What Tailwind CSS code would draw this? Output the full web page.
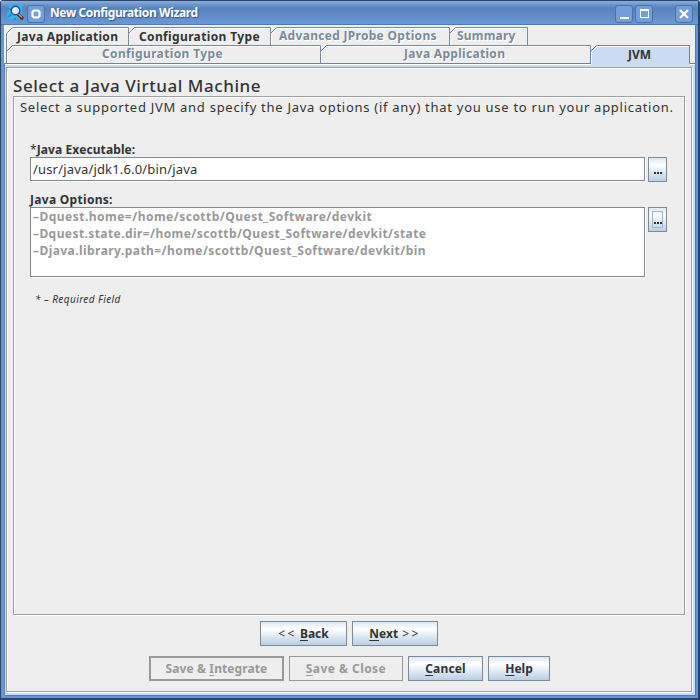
<!DOCTYPE html>
<html lang="en">
<head>
<meta charset="utf-8">
<title>New Configuration Wizard</title>
<script src="https://cdn.jsdelivr.net/npm/@tailwindcss/browser@4"></script>
</head>
<body class="w-[700px] h-[700px] overflow-hidden font-['Noto_Sans','Open_Sans',sans-serif] text-[#333333]">
<div class="w-[700px] h-[700px] flex flex-col bg-[#6796d6] border-l border-t border-b-2 border-r-2 border-[#2c4468] rounded-t-[3px]">
  <!-- title bar -->
  <header class="h-[24px] shrink-0 flex items-center pl-[6px] pr-[5px] bg-linear-to-b from-[#86aee0] via-[#5883bb] via-30% to-[#6a98d6] border-b border-[#4f78b4]">
    <svg class="w-[18px] h-[18px] mt-px" viewBox="0 0 18 18">
      <path d="M1 1L6 0L8 1L14 0L16 4L15 8L16 13L12 15L8 14L4 16L1 15L0 9L2 7Z" fill="#38b2ef"/>
      <path d="M1 4L4 6M1 13L5 10M9 14L7 16" stroke="#0b8fdb" stroke-width="1.500"/>
      <path d="M11.500 10.500L15 14" stroke="#4b2418" stroke-width="3.200" stroke-linecap="round"/>
      <path d="M11.500 10L15 13.500" stroke="#e8984a" stroke-width="1.500"/>
      <circle cx="8.500" cy="6.500" r="4.200" fill="#e2effb" stroke="#2646b4" stroke-width="1.400"/>
      <path d="M6.500 6.500Q6.500 4.500 8.500 4.500" fill="none" stroke="#fff" stroke-width="1.200"/>
    </svg>
    <span class="ml-[2px] mt-[2px] w-[18px] h-[18px] rounded-[3px] border border-[#4a70ab] bg-[#759ed8] flex items-center justify-center"><svg class="w-[10px] h-[10px]" viewBox="0 0 10 10"><path d="M3 1.500H7L8.500 3V7L7 8.500H3L1.500 7V3Z" fill="none" stroke="#fff" stroke-width="2.200"/></svg></span>
    <h1 class="ml-[5px] text-[12px] leading-[20px] font-bold text-white tracking-[-0.4px] whitespace-nowrap [text-shadow:1px_1px_1px_#33558c]">New Configuration Wizard</h1>
    <div class="ml-auto flex items-center mt-[2px]">
      <span class="w-[18px] h-[18px] rounded-[3px] border border-[#4a70ab] bg-[#759ed8] flex justify-center items-end pb-[3px]"><i class="w-[9px] h-[2px] bg-white"></i></span>
      <span class="ml-[2px] w-[18px] h-[18px] rounded-[3px] border border-[#4a70ab] bg-[#759ed8] flex items-center justify-center"><i class="w-[9px] h-[9px] border border-t-2 border-white"></i></span>
      <span class="ml-[22px] w-[18px] h-[18px] rounded-[3px] border border-[#4a70ab] bg-[#759ed8] flex items-center justify-center"><svg class="w-[10px] h-[10px]" viewBox="0 0 10 10"><path d="M1 1L9 9M9 1L1 9" stroke="#fff" stroke-width="2.200"/></svg></span>
    </div>
  </header>

  <main class="flex-1 flex flex-col ml-[3px] mr-[3px] mb-[3px] bg-[#eeeeee] shadow-[1px_1px_0_#5679ad]">
    <!-- tab rows -->
    <nav class="h-[38px] pt-[2px] pl-[2px] flex flex-col text-[12px] leading-[18px] font-bold whitespace-nowrap">
      <div class="h-[18px] flex">
        <div class="relative w-[122px] pl-[11px]"><svg class="absolute left-0 top-0 w-[123px] h-[19px]" fill="none"><path d="M1.500 19V7L7 1.500H122" stroke="#fff"/><path d="M.5 19V6.500L6.500 .5H122.500V19" stroke="#7a8a99"/></svg><span class="relative top-px tracking-[0.3px]">Java Application</span></div>
        <div class="relative w-[142px] pl-[11px]"><svg class="absolute left-0 top-0 w-[143px] h-[19px]" fill="none"><path d="M1.500 19V7L7 1.500H142" stroke="#fff"/><path d="M.5 19V6.500L6.500 .5H142.500V19" stroke="#7a8a99"/></svg><span class="relative top-px tracking-[0.36px]">Configuration Type</span></div>
        <div class="relative w-[179px] pl-[9px] text-[#7a8a99] [text-shadow:1px_1px_0_#fff]"><svg class="absolute left-0 top-0 w-[180px] h-[19px]" fill="none"><path d="M1.500 19V7L7 1.500H179" stroke="#fff"/><path d="M.5 19V6.500L6.500 .5H179.500V19" stroke="#7a8a99"/></svg><span class="relative tracking-[0.3px]">Advanced JProbe Options</span></div>
        <div class="relative w-[78px] pl-[8px] text-[#7a8a99] [text-shadow:1px_1px_0_#fff]"><svg class="absolute left-0 top-0 w-[79px] h-[19px]" fill="none"><path d="M1.500 19V7L7 1.500H78" stroke="#fff"/><path d="M.5 19V6.500L6.500 .5H78.500V19" stroke="#7a8a99"/></svg><span class="relative tracking-[0.2px]">Summary</span></div>
      </div>
      <div class="h-[18px] flex text-[#7a8a99] [text-shadow:1px_1px_0_#fff]">
        <div class="relative w-[314px] pl-[96px] leading-[17px]"><svg class="absolute left-0 top-0 w-[315px] h-[18px]" fill="none"><path d="M1.500 18V7L7 1.500H314" stroke="#fff"/><path d="M.5 0V18M.5 6.500L6.500 .5H314.500V18" stroke="#7a8a99"/></svg><span class="relative tracking-[0.36px]">Configuration Type</span></div>
        <div class="relative w-[270px] pl-[84px] leading-[17px]"><svg class="absolute left-0 top-0 w-[271px] h-[18px]" fill="none"><path d="M1.500 18V7L7 1.500H270" stroke="#fff"/><path d="M.5 18V6.500L6.500 .5H270.500V18" stroke="#7a8a99"/></svg><span class="relative tracking-[0.3px]">Java Application</span></div>
        <div class="relative z-10 w-[101px] text-center text-[#333] leading-[20px] [text-shadow:none]"><svg class="absolute left-0 top-0 w-[101px] h-[20px]"><path d="M1 20V6L7 0H100V20Z" fill="#c8ddf2"/><path d="M1.500 19V7L7 1.500H99" fill="none" stroke="#fff"/><path d="M.5 18V6.500L6.500 .5H99.500V18.500" fill="none" stroke="#6382bf"/></svg><span class="relative left-[-1px] tracking-[0]">JVM</span></div>
      </div>
    </nav>

    <!-- selected tab content -->
    <section class="flex-1 border-t border-l border-[#6382bf] bg-[#c8ddf2] pl-px pr-[3px] pb-[3px] flex shadow-[inset_0_1px_0_#fff] pt-[3px]">
      <div class="flex-1 flex flex-col border border-[#9f9f9f] shadow-[inset_1px_1px_0_#fff,1px_1px_0_#fff] bg-[#eeeeee] pl-[6px] pr-[6px]">
        <h2 class="h-[28px] pt-[5px] text-[17px] leading-[26px] font-medium tracking-[0.55px] whitespace-nowrap">Select a Java Virtual Machine</h2>
        <div class="h-[519px] border border-[#9f9f9f] shadow-[inset_1px_1px_0_#fff,1px_1px_0_#fff] flex flex-col">
          <p class="h-[44px] pl-[6px] pt-px text-[13px] leading-[18px] tracking-[0.72px] whitespace-nowrap">Select a supported JVM and specify the Java options (if any) that you use to run your application.</p>
          <label class="h-[16px] pl-[16px] text-[12px] leading-[17px] font-bold tracking-[0.1px] whitespace-nowrap"><span class="font-normal">*</span>Java Executable:</label>
          <div class="h-[25px] pl-[16px] flex gap-[3px]">
            <div class="w-[615px] h-[24px] bg-white border border-[#7a8a99] shadow-[1px_1px_0_#fff] pl-[2px] text-[13px] leading-[23px] tracking-[0.17px]">/usr/java/jdk1.6.0/bin/java</div>
            <button class="w-[19px] h-[25px] border border-[#7a8a99] bg-linear-to-b from-[#dde8f3] via-white via-30% to-[#b8cfe5] flex justify-center gap-px pt-[14px]"><i class="size-[2px] bg-[#333]"></i><i class="size-[2px] bg-[#333]"></i><i class="size-[2px] bg-[#333]"></i></button>
          </div>
          <label class="h-[25px] pt-[9px] pl-[16px] text-[12px] leading-[17px] font-bold tracking-[0.3px] whitespace-nowrap">Java Options:</label>
          <div class="h-[70px] pl-[16px] flex gap-[3px]">
            <div class="w-[615px] h-[70px] bg-white border border-[#7a8a99] shadow-[1px_1px_0_#fff] pl-[2px] text-[12px] leading-[17px] font-bold text-[#999] whitespace-nowrap">
              <p class="tracking-[0.48px]">–Dquest.home=/home/scottb/Quest_Software/devkit</p>
              <p class="tracking-[0.42px]">–Dquest.state.dir=/home/scottb/Quest_Software/devkit/state</p>
              <p class="tracking-[0.44px]">–Djava.library.path=/home/scottb/Quest_Software/devkit/bin</p>
            </div>
            <button class="w-[19px] h-[25px] border border-[#7a8a99] bg-linear-to-b from-[#dde8f3] via-white via-30% to-[#b8cfe5] flex justify-center pt-[3px]"><span class="w-[11px] h-[17px] border border-[#a3b8cc] flex justify-center gap-px pt-[10px]"><i class="size-[2px] bg-[#333]"></i><i class="size-[2px] bg-[#333]"></i><i class="size-[2px] bg-[#333]"></i></span></button>
          </div>
          <p class="pl-[21px] pt-[14px] text-[10px] leading-[16px] italic tracking-[0.42px] whitespace-nowrap">* – Required Field</p>
        </div>

        <!-- wizard navigation -->
        <div class="mt-[6px] pl-[247px] flex gap-[5px] text-[12px] leading-[23px] font-bold text-center whitespace-nowrap">
          <button class="w-[87px] h-[25px] border border-[#7a8a99] bg-linear-to-b from-[#dde8f3] via-white via-30% to-[#b8cfe5]"><span class="font-normal tracking-[2.400px]">&lt;&lt;</span> <u class="underline-offset-2">B</u>ack</button>
          <button class="w-[86px] h-[25px] border border-[#7a8a99] bg-linear-to-b from-[#dde8f3] via-white via-30% to-[#b8cfe5]"><u class="underline-offset-2">N</u>ext <span class="ml-px font-normal tracking-[2.400px]">&gt;&gt;</span></button>
        </div>
        <div class="mt-[10px] pl-[136px] flex gap-[5px] text-[12px] leading-[23px] font-bold text-center whitespace-nowrap">
          <button class="w-[135px] h-[25px] border-2 border-[#999] text-[#999] leading-[21px] tracking-[0.1px]">Save &amp; <u class="underline-offset-2">I</u>ntegrate</button>
          <button class="w-[114px] h-[25px] border border-[#999] text-[#999] tracking-[0.45px]"><u class="underline-offset-2">S</u>ave &amp; Close</button>
          <button class="w-[75px] h-[25px] border border-[#7a8a99] bg-linear-to-b from-[#dde8f3] via-white via-30% to-[#b8cfe5] tracking-[0.15px]"><u class="underline-offset-2">C</u>ancel</button>
          <button class="w-[62px] h-[25px] border border-[#7a8a99] bg-linear-to-b from-[#dde8f3] via-white via-30% to-[#b8cfe5]"><u class="underline-offset-2">H</u>elp</button>
        </div>
      </div>
    </section>
  </main>
</div>
</body>
</html>
